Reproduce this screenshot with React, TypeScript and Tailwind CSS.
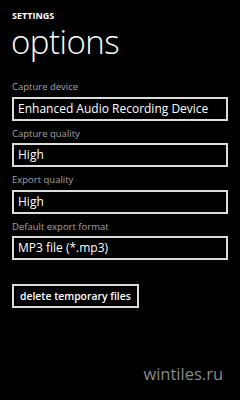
export default function App() {
  const fields = [
    { label: 'Capture device', value: 'Enhanced Audio Recording Device' },
    { label: 'Capture quality', value: 'High' },
    { label: 'Export quality', value: 'High' },
    { label: 'Default export format', value: 'MP3 file (*.mp3)' },
  ];

  return (
    <div
      className="flex h-[400px] w-[240px] flex-col bg-black px-[12px] text-white"
      style={{ fontFamily: '"Open Sans", "Noto Sans", sans-serif' }}
    >
      <div className="mt-[11px] text-[9px] font-bold leading-[9px]">SETTINGS</div>
      <div className="ml-[-1px] mt-[5px] text-[33px] font-light leading-[33px] tracking-[-0.5px]">options</div>

      <div className="mt-[24px] flex flex-col gap-[8px]">
        {fields.map((f) => (
          <div key={f.label} className="flex flex-col">
            <div className="mb-[5px] text-[9.5px] leading-[9.5px] text-[#a3a3a3]">{f.label}</div>
            <div className="flex h-[24px] items-center border-2 border-[#dcdcdc] px-[4px] text-[12px] leading-[12px]">
              {f.value}
            </div>
          </div>
        ))}
      </div>

      <div className="mt-[24px] flex">
        <button
          type="button"
          className="flex h-[24px] items-center border-2 border-[#dcdcdc] px-[6px] text-[10.4px] font-semibold leading-[10px]"
        >
          delete temporary files
        </button>
      </div>

      <div className="mr-[5px] mt-[58px] self-end text-[16.5px] leading-[16px] text-[#8a8a8a]">wintiles.ru</div>
    </div>
  );
}
